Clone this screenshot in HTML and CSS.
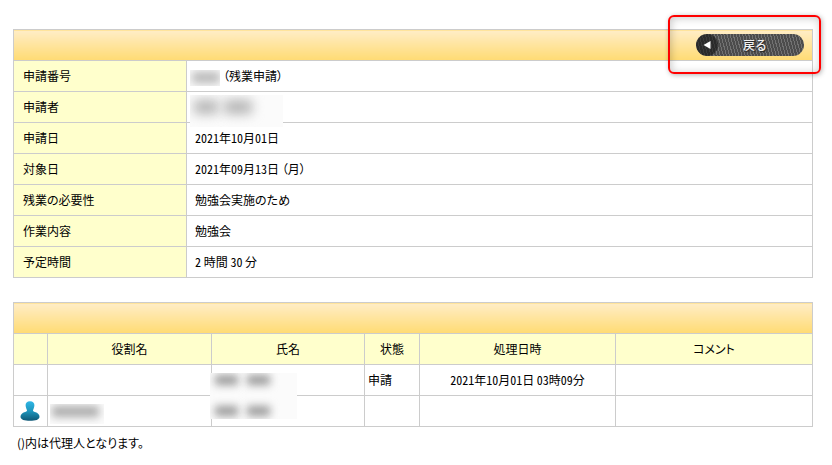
FILE: index.html
```
<!DOCTYPE html>
<html lang="ja">
<head>
<meta charset="utf-8">
<meta name="viewport" content="width=device-width, initial-scale=1">
<title>残業申請</title>
<link rel="stylesheet" href="styles.css">
</head>
<body>
<main>
  <div class="panel">
    <table class="grid detail">
      <colgroup><col class="col-label"><col></colgroup>
      <thead>
        <tr>
          <td class="bar" colspan="2">
            <div class="bar-actions">
              <button class="back" type="button">
                <span class="back-cap"><svg viewBox="0 0 8 8" width="8" height="8" aria-hidden="true"><path d="M7.5 0v8L0.5 4z" fill="#fff"/></svg></span>
                <span class="back-text">戻る</span>
              </button>
            </div>
          </td>
        </tr>
      </thead>
      <tbody>
        <tr><th scope="row">申請番号</th><td><span class="mask mask-number"><i></i></span><span class="after-mask">（残業申請）</span></td></tr>
        <tr><th scope="row">申請者</th><td><span class="mask mask-applicant"><i></i><i></i></span></td></tr>
        <tr><th scope="row">申請日</th><td><span class="num">2021年10月01日</span></td></tr>
        <tr><th scope="row">対象日</th><td><span class="num">2021年09月13日</span> （月）</td></tr>
        <tr><th scope="row">残業の必要性</th><td>勉強会実施のため</td></tr>
        <tr><th scope="row">作業内容</th><td>勉強会</td></tr>
        <tr><th scope="row">予定時間</th><td><span class="num">2</span> 時間 <span class="num">30</span> 分</td></tr>
      </tbody>
    </table>
    <div class="callout"></div>
  </div>

  <table class="grid route">
    <colgroup><col class="col-mark"><col class="col-role"><col class="col-name"><col class="col-state"><col class="col-date"><col></colgroup>
    <thead>
      <tr><td class="bar" colspan="6"></td></tr>
      <tr><th></th><th scope="col">役割名</th><th scope="col">氏名</th><th scope="col">状態</th><th scope="col">処理日時</th><th scope="col">コメント</th></tr>
    </thead>
    <tbody>
      <tr><td></td><td></td><td><span class="mask mask-names"><i></i><i></i><i></i><i></i></span></td><td>申請</td><td class="date"><span class="num">2021年10月01日</span> <span class="num">03時09分</span></td><td></td></tr>
      <tr>
        <td class="mark"><svg class="person" viewBox="0 0 20 20" width="20" height="20" aria-hidden="true">
          <defs><linearGradient id="person-fill" x1="0" y1="0" x2="0" y2="1"><stop offset="0" stop-color="#2fb6e6"/><stop offset="0.5" stop-color="#1e96bd"/><stop offset="1" stop-color="#0f5876"/></linearGradient></defs>
          <path fill="url(#person-fill)" d="M10 .2C7 .2 5.500 2 5.600 4.300C5.700 6.500 6.500 8 7 9.200C7 10.200 6.500 10.500 5 10.900C2 11.700 .5 13.500 .5 15.700C.5 18.600 4.500 19.800 10 19.800S19.500 18.600 19.500 15.700C19.500 13.500 18 11.700 15 10.900C13.500 10.500 13 10.200 13 9.200C13.500 8 14.300 6.500 14.400 4.300C14.500 2 13 .2 10 .2Z"/>
        </svg></td>
        <td><span class="mask mask-role"><i></i></span></td><td></td><td></td><td></td><td></td>
      </tr>
    </tbody>
  </table>
  <p class="note">()内は代理人となります。</p>
</main>
</body>
</html>
```
FILE: styles.css
```
body {
  margin: 0;
  padding: 29px 19px 8px 13px;
  background: #fff;
  color: #000;
  font: 12px/18px "Noto Sans CJK JP", sans-serif;
  font-feature-settings: "palt";
}

.num { font-feature-settings: "hwid"; }

.panel { position: relative; }

.grid {
  width: 100%;
  table-layout: fixed;
  border-collapse: collapse;
}

.grid th,
.grid td {
  box-sizing: border-box;
  height: 31px;
  padding: 0;
  border: 1px solid #ccc;
  font-weight: 400;
  text-align: left;
  position: relative;
}

.grid th { background: #ffc; }

.grid .bar { background: linear-gradient(#ffedc6, #ffdb73); }

.grid.detail th { padding-left: 9px; }
.grid.detail td { padding-left: 8px; }
.col-label { width: 173px; }

.route { margin-top: 24px; }
.grid.route th { text-align: center; }
.grid.route td { padding-left: 3px; }
.grid.route .date { padding: 0; text-align: center; }
.grid.route .mark { padding: 0 1px 0 0; }
.col-mark { width: 34px; }
.col-role { width: 164px; }
.col-name { width: 153px; }
.col-state { width: 55px; }
.col-date { width: 196px; }

.person { display: block; margin: 0 auto; }

.bar-actions {
  display: flex;
  justify-content: flex-end;
  padding-right: 8px;
}

/* Highlight frame drawn around the button, over the table edge */
.callout {
  position: absolute;
  box-sizing: border-box;
  top: -14px;
  right: -8px;
  width: 153px;
  height: 59px;
  border: 2px solid #f00;
  border-radius: 6px;
  box-shadow: 1px 1px 5px rgba(0, 0, 0, .3), inset 1px 1px 8px rgba(0, 0, 0, .22);
  pointer-events: none;
  z-index: 2;
}

.back {
  display: flex;
  align-items: center;
  width: 108px;
  height: 22px;
  padding: 0;
  border: 0;
  border-radius: 11px;
  overflow: hidden;
  background: repeating-linear-gradient(75deg, #4c4c4c 0 2px, #727272 2px 3px);
  color: #f2f2f2;
  font: 500 12px/22px "Noto Sans CJK JP", sans-serif;
  text-shadow: 1px 1px 1px #222;
}

.back-cap {
  display: flex;
  align-items: center;
  justify-content: center;
  width: 22px;
  height: 22px;
  border-radius: 11px;
  background: rgba(20, 20, 20, .6);
}

.back-text { padding-left: 25px; }

/* Blurred-out personal data */
.mask {
  position: absolute;
  left: 3px;
  overflow: hidden;
  background: #fbfbfb;
  z-index: 1;
}

.mask i {
  position: absolute;
  background: #b4b4b4;
  filter: blur(5px);
}

.mask-number { top: 9px; width: 30px; height: 16px; }
.mask-number i { inset: 2px 0 3px 2px; }
.after-mask { padding-left: 28px; }

.mask-applicant { top: 3px; width: 93px; height: 32px; }
.mask-applicant i { top: 5px; width: 24px; height: 14px; left: 4px; filter: blur(6px); }
.mask-applicant i + i { left: 34px; width: 28px; }

.mask-names { top: 8px; left: -2px; width: 87px; height: 46px; }
.mask-names i { top: 2px; left: 5px; width: 23px; height: 10px; background: #999; filter: blur(4px); }
.mask-names i:nth-child(even) { left: 37px; }
.mask-names i:nth-child(n+3) { top: 33px; }

.mask-role { top: 8px; left: 2px; width: 54px; height: 20px; }
.mask-role i { inset: 2px 5px 7px 2px; background: #aaa; filter: blur(4px); }

.note { margin: 7px 0 0 4px; }
```
